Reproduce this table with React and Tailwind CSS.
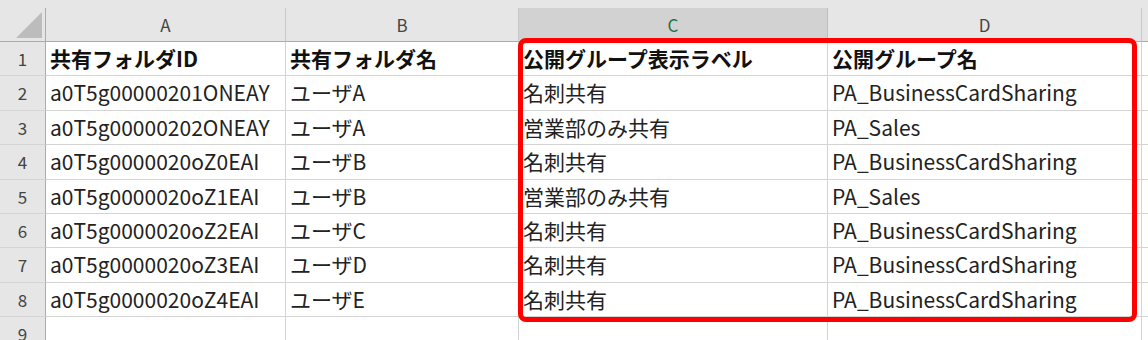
import React from "react";

const cols = ["A", "B", "C", "D"];

const rows = [
  ["共有フォルダID", "共有フォルダ名", "公開グループ表示ラベル", "公開グループ名"],
  ["a0T5g00000201ONEAY", "ユーザA", "名刺共有", "PA_BusinessCardSharing"],
  ["a0T5g00000202ONEAY", "ユーザA", "営業部のみ共有", "PA_Sales"],
  ["a0T5g0000020oZ0EAI", "ユーザB", "名刺共有", "PA_BusinessCardSharing"],
  ["a0T5g0000020oZ1EAI", "ユーザB", "営業部のみ共有", "PA_Sales"],
  ["a0T5g0000020oZ2EAI", "ユーザC", "名刺共有", "PA_BusinessCardSharing"],
  ["a0T5g0000020oZ3EAI", "ユーザD", "名刺共有", "PA_BusinessCardSharing"],
  ["a0T5g0000020oZ4EAI", "ユーザE", "名刺共有", "PA_BusinessCardSharing"],
];

const font = { fontFamily: '"Noto Sans CJK JP", "Liberation Sans", sans-serif' };

export default function App() {
  return (
    <div className="relative w-[1148px] h-[340px] overflow-hidden bg-white" style={font}>
      <div className="h-[8px] bg-[#e6e6e6]" />
      <div className="grid grid-cols-[46px_240px_233px_309px_314px_1fr]">
        {/* corner */}
        <div className="relative h-[34px] bg-[#e6e6e6] border-r border-b border-[#ababab]">
          <div className="absolute left-[16px] top-[4px] w-0 h-0 border-l-[26px] border-l-transparent border-b-[26px] border-b-[#bcbcbc]" />
        </div>
        {cols.map((c) => (
          <div
            key={c}
            className={
              "h-[34px] flex items-center justify-center text-[17px] border-r border-b " +
              (c === "C"
                ? "bg-[#d2d2d2] text-[#217346] border-r-[#bdbdbd] border-b-[#ababab]"
                : "bg-[#e6e6e6] text-[#444] border-r-[#c8c8c8] border-b-[#ababab]")
            }
          >
            {c}
          </div>
        ))}
        <div className="h-[34px] bg-[#e6e6e6] border-b border-[#ababab]" />

        {rows.map((r, i) => (
          <React.Fragment key={i}>
            <div className="h-[34.4px] flex items-center justify-center text-[17px] text-[#444] bg-[#e6e6e6] border-r border-r-[#ababab] border-b border-b-[#d4d4d4]">
              {i + 1}
            </div>
            {r.map((v, j) => (
              <div
                key={j}
                className={
                  "h-[34.4px] flex items-center pl-[4px] text-[21px] whitespace-nowrap overflow-hidden border-r border-b border-[#d4d4d4] " +
                  (i === 0 ? "font-bold text-[#111]" : "text-[#222]")
                }
              >
                {v}
              </div>
            ))}
            <div className="h-[34.4px] border-b border-[#d4d4d4]" />
          </React.Fragment>
        ))}

        <div className="h-[34px] flex items-center justify-center text-[17px] text-[#444] bg-[#e6e6e6] border-r border-r-[#ababab]">
          9
        </div>
        <div className="h-[34px] border-r border-[#d4d4d4]" />
        <div className="h-[34px] border-r border-[#d4d4d4]" />
        <div className="h-[34px] border-r border-[#d4d4d4]" />
        <div className="h-[34px] border-r border-[#d4d4d4]" />
        <div className="h-[34px]" />
      </div>

      {/* highlight frame over columns C and D */}
      <div className="absolute left-[518px] top-[38px] w-[619px] h-[284px] border-[5px] border-[#ff0000] rounded-[8px] pointer-events-none" />
    </div>
  );
}
